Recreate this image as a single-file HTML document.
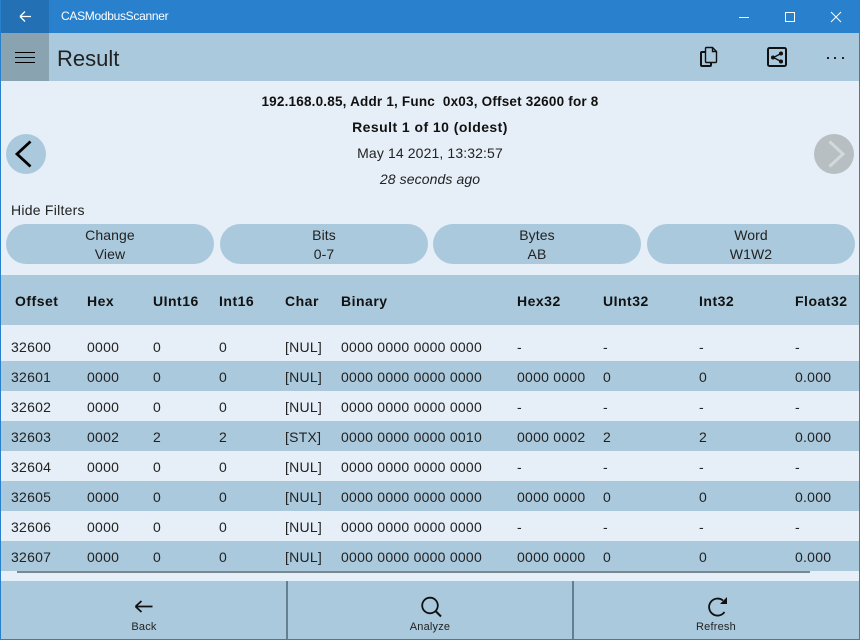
<!DOCTYPE html>
<html><head><meta charset="utf-8"><style>
html,body{margin:0;padding:0;width:860px;height:640px;overflow:hidden;background:#e6eff7}
body{position:relative;font-family:"Liberation Sans",sans-serif;color:#1a1a1a;font-size:14px}
.a{position:absolute;white-space:nowrap}
.c{position:absolute;white-space:nowrap;text-align:center}
.band{position:absolute;left:1px;width:858px;background:#aac9dc}
.r{position:absolute;left:0;width:860px;height:30px;line-height:30px;letter-spacing:.25px;color:#222}
.r span{position:absolute;top:0;white-space:nowrap}
.h{position:absolute;top:292px;font-weight:bold;line-height:18px;color:#111;letter-spacing:.5px}
.x1{left:11px}.x2{left:87px}.x3{left:153px}.x4{left:219px}.x5{left:285px}.x6{left:341px}.x7{left:517px}.x8{left:603px}.x9{left:699px}.x10{left:795px}
.pill{position:absolute;top:224px;height:38.5px;padding-top:1.5px;width:208px;border-radius:20px;background:#aac9dc;text-align:center;line-height:19px;letter-spacing:.1px;color:#222}
</style></head><body>
<div class="a" style="left:0;top:0;width:860px;height:33px;background:#2980cc"></div>
<div class="a" style="left:1px;top:0;width:48px;height:33px;background:#2470b5"></div>
<svg class="a" style="left:0;top:0" width="860" height="33" fill="none" stroke="#fff" stroke-width="1">
<path d="M20 16.5H31M20 16.5L25 11.5M20 16.5L25 21.5" stroke-width="1.3"/>
<path d="M739 17.5H749"/><rect x="785.5" y="12.5" width="9" height="9"/><path d="M831 12L841 22M841 12L831 22"/></svg>
<div class="a" style="left:61px;top:8px;color:#fff;font-size:12px;line-height:17px;letter-spacing:-.3px">CASModbusScanner</div>

<div class="a" style="left:1px;top:33px;width:858px;height:48px;background:#aac9dc"></div>
<div class="a" style="left:1px;top:33px;width:48px;height:48px;background:#8aa3b0"></div>
<svg class="a" style="left:0;top:33px" width="860" height="48" fill="none" stroke="#111">
<path d="M15 19.500H35M15 24.500H35M15 29.500H35" stroke="#000" stroke-width="1"/>
<path d="M712.500 14.500H706.500Q705.500 14.500 705.500 15.500V28.500Q705.500 29.500 706.500 29.500H715.500Q716.500 29.500 716.500 28.500V18.500ZM712.500 14.500V18.500H716.500" stroke-width="1.400"/>
<path d="M705 19H702Q701 19 701 20V32Q701 33 702 33H710Q711 33 711 32V29.500" stroke-width="2"/>
<rect x="768" y="15" width="18" height="18" rx="1.500" stroke-width="2"/>
<path d="M781 20.500L773.500 24.500L781 28.500" stroke-width="1.300"/>
<circle cx="773" cy="24.500" r="2" fill="#111" stroke="none"/><circle cx="781" cy="20.500" r="2" fill="#111" stroke="none"/><circle cx="781" cy="28.500" r="2" fill="#111" stroke="none"/>
<g fill="#222" stroke="none"><rect x="827" y="24" width="2" height="2"/><rect x="834" y="24" width="2" height="2"/><rect x="842" y="24" width="2" height="2"/></g>
</svg>
<div class="a" style="left:57px;top:44px;font-size:22px;line-height:30px;color:#222">Result</div>

<div class="c" style="left:0;width:860px;top:93px;line-height:17px;font-size:13.5px;font-weight:bold;color:#111;letter-spacing:.2px">192.168.0.85, Addr 1, Func&nbsp; 0x03, Offset 32600 for 8</div>
<div class="c" style="left:0;width:860px;top:118px;line-height:18px;font-weight:bold;color:#111;letter-spacing:.45px">Result 1 of 10 (oldest)</div>
<div class="c" style="left:0;width:860px;top:144px;line-height:18px;color:#222;letter-spacing:.12px">May 14 2021, 13:32:57</div>
<div class="c" style="left:0;width:860px;top:170px;line-height:18px;font-style:italic;color:#222;letter-spacing:.1px">28 seconds ago</div>

<div class="a" style="left:6px;top:134px;width:40px;height:40px;border-radius:50%;background:#aac9dc"></div>
<svg class="a" style="left:6px;top:134px" width="40" height="40" fill="none" stroke="#000" stroke-width="2.800"><path d="M24.500 7.500L11 20L24.500 32.500"/></svg>
<div class="a" style="left:814px;top:134px;width:40px;height:40px;border-radius:50%;background:#b8bfc2"></div>
<svg class="a" style="left:814px;top:134px" width="40" height="40" fill="none" stroke="#d3d8da" stroke-width="3"><path d="M15.500 7.500L29 20L15.500 32.500"/></svg>

<div class="a" style="left:11px;top:201px;line-height:18px;color:#222;letter-spacing:.25px">Hide Filters</div>
<div class="pill" style="left:6px">Change<br>View</div>
<div class="pill" style="left:220px">Bits<br>0-7</div>
<div class="pill" style="left:433px">Bytes<br>AB</div>
<div class="pill" style="left:647px">Word<br>W1W2</div>

<div class="band" style="top:275px;height:50px"></div>
<div class="h" style="left:15px">Offset</div><div class="h x2">Hex</div><div class="h x3">UInt16</div><div class="h x4">Int16</div><div class="h x5">Char</div><div class="h x6">Binary</div><div class="h x7">Hex32</div><div class="h x8">UInt32</div><div class="h x9">Int32</div><div class="h x10">Float32</div>

<div class="band" style="top:361px;height:30px"></div>
<div class="band" style="top:421px;height:30px"></div>
<div class="band" style="top:481px;height:30px"></div>
<div class="band" style="top:541px;height:30px"></div>

<div class="r" style="top:332px"><span class="x1">32600</span><span class="x2">0000</span><span class="x3">0</span><span class="x4">0</span><span class="x5">[NUL]</span><span class="x6">0000 0000 0000 0000</span><span class="x7">-</span><span class="x8">-</span><span class="x9">-</span><span class="x10">-</span></div>
<div class="r" style="top:362px"><span class="x1">32601</span><span class="x2">0000</span><span class="x3">0</span><span class="x4">0</span><span class="x5">[NUL]</span><span class="x6">0000 0000 0000 0000</span><span class="x7">0000 0000</span><span class="x8">0</span><span class="x9">0</span><span class="x10">0.000</span></div>
<div class="r" style="top:392px"><span class="x1">32602</span><span class="x2">0000</span><span class="x3">0</span><span class="x4">0</span><span class="x5">[NUL]</span><span class="x6">0000 0000 0000 0000</span><span class="x7">-</span><span class="x8">-</span><span class="x9">-</span><span class="x10">-</span></div>
<div class="r" style="top:422px"><span class="x1">32603</span><span class="x2">0002</span><span class="x3">2</span><span class="x4">2</span><span class="x5">[STX]</span><span class="x6">0000 0000 0000 0010</span><span class="x7">0000 0002</span><span class="x8">2</span><span class="x9">2</span><span class="x10">0.000</span></div>
<div class="r" style="top:452px"><span class="x1">32604</span><span class="x2">0000</span><span class="x3">0</span><span class="x4">0</span><span class="x5">[NUL]</span><span class="x6">0000 0000 0000 0000</span><span class="x7">-</span><span class="x8">-</span><span class="x9">-</span><span class="x10">-</span></div>
<div class="r" style="top:482px"><span class="x1">32605</span><span class="x2">0000</span><span class="x3">0</span><span class="x4">0</span><span class="x5">[NUL]</span><span class="x6">0000 0000 0000 0000</span><span class="x7">0000 0000</span><span class="x8">0</span><span class="x9">0</span><span class="x10">0.000</span></div>
<div class="r" style="top:512px"><span class="x1">32606</span><span class="x2">0000</span><span class="x3">0</span><span class="x4">0</span><span class="x5">[NUL]</span><span class="x6">0000 0000 0000 0000</span><span class="x7">-</span><span class="x8">-</span><span class="x9">-</span><span class="x10">-</span></div>
<div class="r" style="top:542px"><span class="x1">32607</span><span class="x2">0000</span><span class="x3">0</span><span class="x4">0</span><span class="x5">[NUL]</span><span class="x6">0000 0000 0000 0000</span><span class="x7">0000 0000</span><span class="x8">0</span><span class="x9">0</span><span class="x10">0.000</span></div>

<div class="a" style="left:17px;top:571px;width:793px;height:2px;background:#7b878e"></div>

<div class="band" style="top:581px;height:58px"></div>
<div class="a" style="left:286px;top:581px;width:2px;height:58px;background:#647f90"></div>
<div class="a" style="left:572px;top:581px;width:2px;height:58px;background:#647f90"></div>
<svg class="a" style="left:0;top:581px" width="860" height="58" fill="none" stroke="#111" stroke-width="1.800">
<path d="M135.500 25.500H152.500M135.500 25.500L141.500 20M135.500 25.500L141.500 31"/>
<circle cx="430" cy="24.500" r="7.800"/><path d="M435.500 30L441 35.500" stroke-width="2"/>
<path d="M723 19.500A8.500 8.500 0 1 0 724.500 31" />
<path d="M727 16V23H720Z" fill="#111" stroke="none"/>
</svg>
<div class="c" style="left:44px;width:200px;top:620px;font-size:11px;line-height:15px;color:#222;letter-spacing:.2px">Back</div>
<div class="c" style="left:330px;width:200px;top:620px;font-size:11px;line-height:15px;color:#222;letter-spacing:.2px">Analyze</div>
<div class="c" style="left:616px;width:200px;top:620px;font-size:11px;line-height:15px;color:#222;letter-spacing:.2px">Refresh</div>

<div class="a" style="left:0;top:33px;width:1px;height:607px;background:#2980cc"></div>
<div class="a" style="left:859px;top:33px;width:1px;height:607px;background:#2980cc"></div>
<div class="a" style="left:0;top:639px;width:860px;height:1px;background:#2980cc"></div>
</body></html>
